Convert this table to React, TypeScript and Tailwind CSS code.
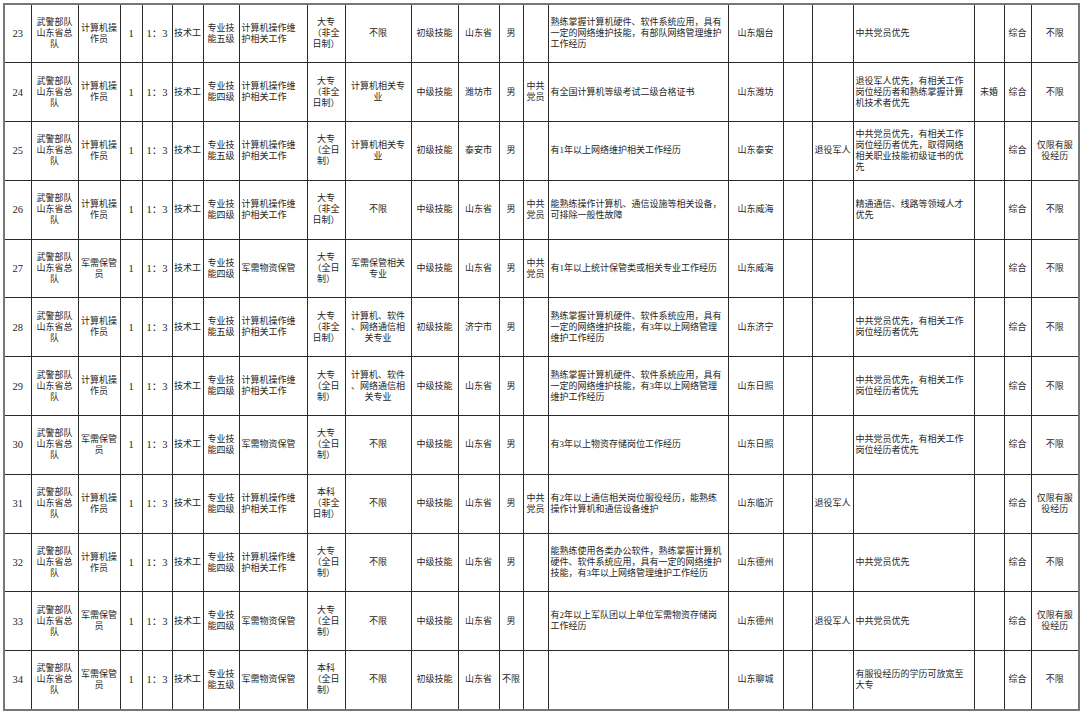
const widths = [27, 47, 42, 22, 30, 31, 36, 68, 38, 66, 47, 41, 24, 25, 180, 55, 29, 41, 121, 30, 27, 48];

// columns whose text sits at the left edge of the cell
const leftCols = [7, 14, 18];
// number columns, set a bit larger
const numCols = [0, 3, 4];

const U = "武警部队\n山东省总\n队";
const JSJ = "计算机操\n作员";
const JX = "军需保管\n员";
const WH = "计算机操作维\n护相关工作";
const WZ = "军需物资保管";
const DZF = "大专\n（非全\n日制）";
const DZ = "大专\n（全日\n制）";
const BKF = "本科\n（非全\n日制）";
const BK = "本科\n（全日\n制）";
const L4 = "专业技\n能四级";
const L5 = "专业技\n能五级";
const DY = "中共\n党员";
const XL = "仅限有服\n役经历";
const TX = "计算机、软件\n、网络通信相\n关专业";
const YX = "中共党员优先，有相关工作\n岗位经历者优先";

const rows: string[][] = [
  ["23", U, JSJ, "1", "1：3", "技术工", L5, WH, DZF, "不限", "初级技能", "山东省", "男", "", "熟练掌握计算机硬件、软件系统应用，具有\n一定的网络维护技能，有部队网络管理维护\n工作经历", "山东烟台", "", "", "中共党员优先", "", "综合", "不限"],
  ["24", U, JSJ, "1", "1：3", "技术工", L4, WH, DZF, "计算机相关专\n业", "中级技能", "潍坊市", "男", DY, "有全国计算机等级考试二级合格证书", "山东潍坊", "", "", "退役军人优先，有相关工作\n岗位经历者和熟练掌握计算\n机技术者优先", "未婚", "综合", "不限"],
  ["25", U, JSJ, "1", "1：3", "技术工", L5, WH, DZ, "计算机相关专\n业", "初级技能", "泰安市", "男", "", "有1年以上网络维护相关工作经历", "山东泰安", "", "退役军人", "中共党员优先，有相关工作\n岗位经历者优先，取得网络\n相关职业技能初级证书的优\n先", "", "综合", XL],
  ["26", U, JSJ, "1", "1：3", "技术工", L4, WH, DZF, "不限", "中级技能", "山东省", "男", DY, "能熟练操作计算机、通信设施等相关设备，\n可排除一般性故障", "山东威海", "", "", "精通通信、线路等领域人才\n优先", "", "综合", "不限"],
  ["27", U, JX, "1", "1：3", "技术工", L4, WZ, DZ, "军需保管相关\n专业", "中级技能", "山东省", "男", DY, "有1年以上统计保管类或相关专业工作经历", "山东威海", "", "", "", "", "综合", "不限"],
  ["28", U, JSJ, "1", "1：3", "技术工", L5, WH, DZF, TX, "初级技能", "济宁市", "男", "", "熟练掌握计算机硬件、软件系统应用，具有\n一定的网络维护技能，有3年以上网络管理\n维护工作经历", "山东济宁", "", "", YX, "", "综合", "不限"],
  ["29", U, JSJ, "1", "1：3", "技术工", L4, WH, DZ, TX, "中级技能", "山东省", "男", "", "熟练掌握计算机硬件、软件系统应用，具有\n一定的网络维护技能，有3年以上网络管理\n维护工作经历", "山东日照", "", "", YX, "", "综合", "不限"],
  ["30", U, JX, "1", "1：3", "技术工", L4, WZ, DZ, "不限", "中级技能", "山东省", "男", "", "有3年以上物资存储岗位工作经历", "山东日照", "", "", YX, "", "综合", "不限"],
  ["31", U, JSJ, "1", "1：3", "技术工", L4, WH, BKF, "不限", "中级技能", "山东省", "男", DY, "有2年以上通信相关岗位服役经历，能熟练\n操作计算机和通信设备维护", "山东临沂", "", "退役军人", "", "", "综合", XL],
  ["32", U, JSJ, "1", "1：3", "技术工", L4, WH, DZ, "不限", "中级技能", "山东省", "男", "", "能熟练使用各类办公软件，熟练掌握计算机\n硬件、软件系统应用，具有一定的网络维护\n技能，有3年以上网络管理维护工作经历", "山东德州", "", "", "中共党员优先", "", "综合", "不限"],
  ["33", U, JX, "1", "1：3", "技术工", L4, WZ, DZ, "不限", "中级技能", "山东省", "男", "", "有2年以上军队团以上单位军需物资存储岗\n工作经历", "山东德州", "", "退役军人", "中共党员优先", "", "综合", XL],
  ["34", U, JX, "1", "1：3", "技术工", L5, WZ, BK, "不限", "初级技能", "山东省", "不限", "", "", "山东聊城", "", "", "有服役经历的学历可放宽至\n大专", "", "综合", "不限"],
];

function cellClass(ci: number) {
  if (leftCols.includes(ci)) {
    return "border border-[#2a2a2a] px-[2px] align-middle text-left whitespace-pre-line";
  }
  if (numCols.includes(ci)) {
    return "border border-[#2a2a2a] px-[1px] align-middle text-center whitespace-pre-line text-[10.5px]";
  }
  return "border border-[#2a2a2a] px-[1px] align-middle text-center whitespace-pre-line";
}

export default function App() {
  return (
    <div className="w-[1080px] h-[713px] bg-white overflow-hidden pt-[3px] pl-[3px]">
      <table
        className="table-fixed border-collapse border-2 border-[#777] text-[9px] leading-[11px] text-[#262626]"
        style={{ width: 1075, fontFamily: '"Liberation Serif", "Noto Sans CJK SC", serif' }}
      >
        <colgroup>
          {widths.map((w, i) => (
            <col key={i} style={{ width: w }} />
          ))}
        </colgroup>
        <tbody>
          {rows.map((r, ri) => (
            <tr key={ri} className="h-[58.8px]">
              {r.map((c, ci) => (
                <td key={ci} className={cellClass(ci)}>
                  {c}
                </td>
              ))}
            </tr>
          ))}
        </tbody>
      </table>
    </div>
  );
}
